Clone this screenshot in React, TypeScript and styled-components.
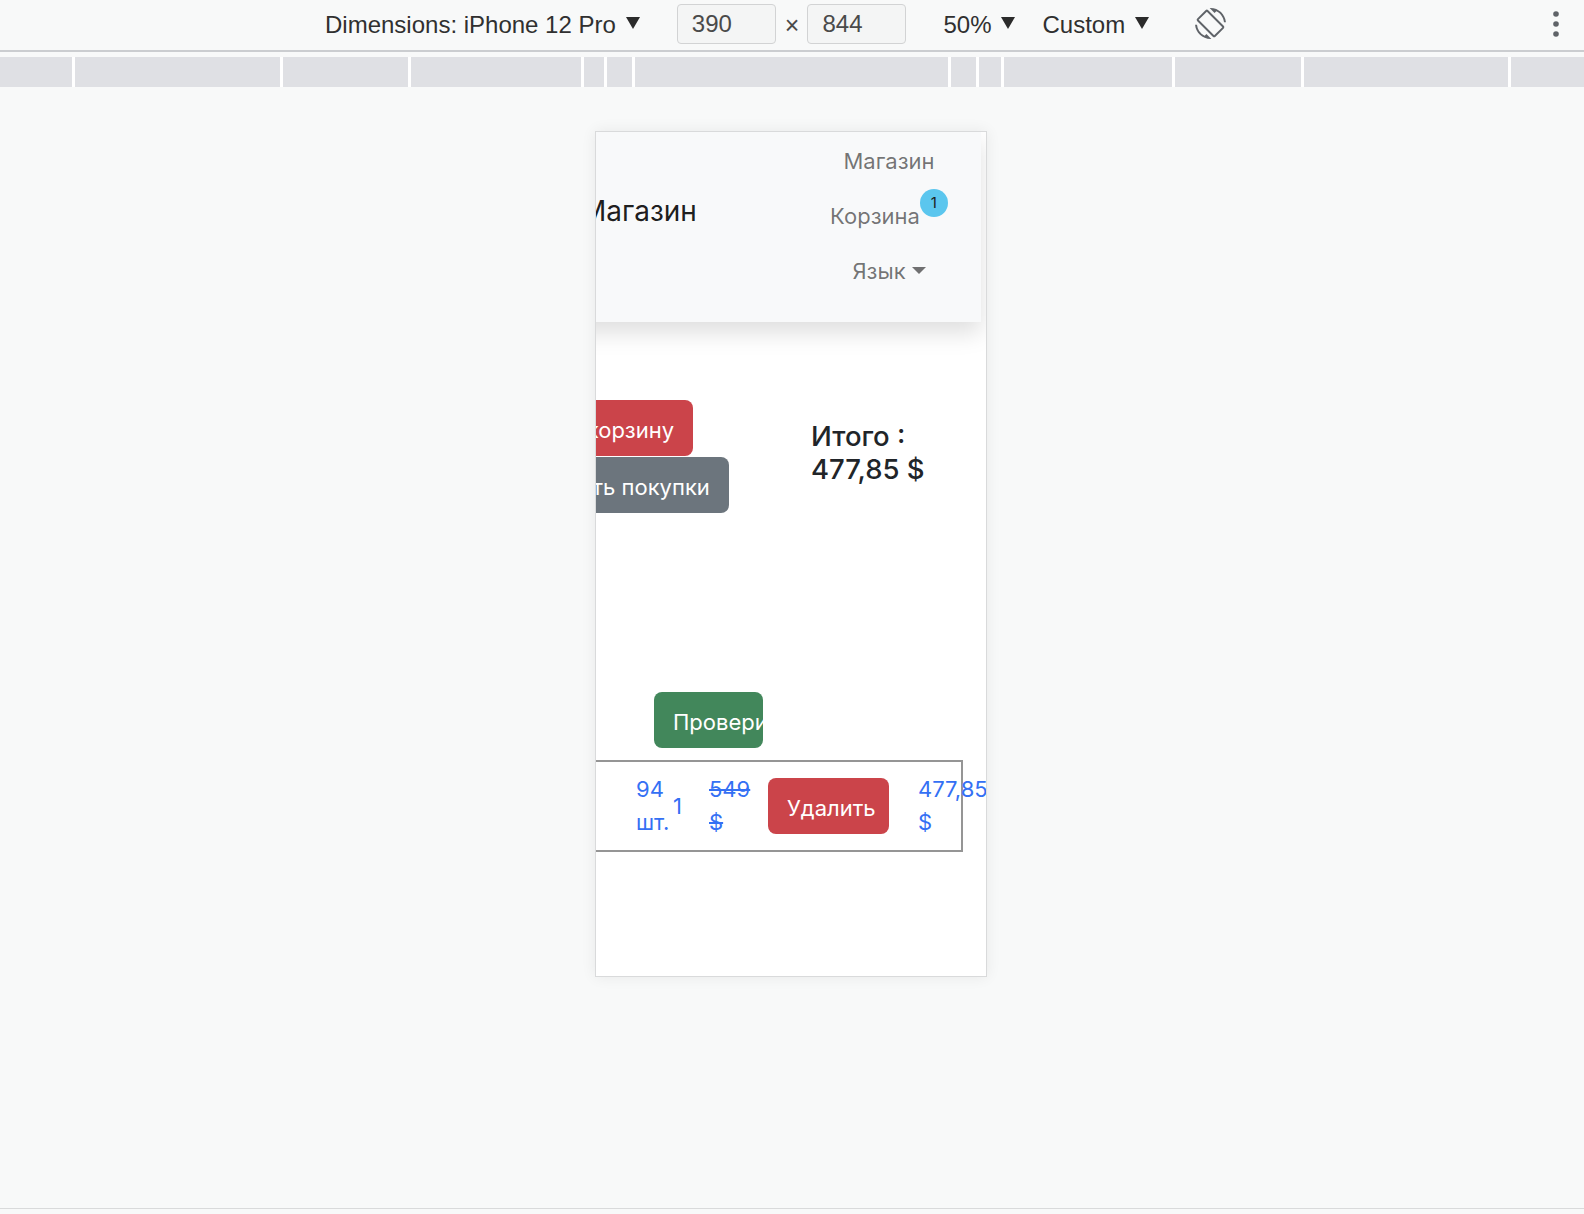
import React from 'react'
import styled, { createGlobalStyle } from 'styled-components'
import { MdOutlineScreenRotation } from 'react-icons/md'

const GlobalStyle = createGlobalStyle`
  html, body {
    margin: 0;
    padding: 0;
    background: #f8f9f9;
  }
  * {
    box-sizing: border-box;
  }
`

const Shell = styled.div`
  height: 1214px;
  display: flex;
  flex-direction: column;
  background: #f8f9f9;
  overflow: hidden;
`

// ---- devtools device toolbar ----

const Toolbar = styled.div`
  height: 52px;
  flex-shrink: 0;
  display: flex;
  align-items: center;
  padding-left: 325px;
  padding-right: 24px;
  border-bottom: 2px solid #cbcdd0;
  font-family: 'Liberation Sans', Arial, sans-serif;
  font-size: 24px;
  color: #303030;
`

const ToolText = styled.span<{ $gap?: number }>`
  margin-left: ${({ $gap }) => $gap ?? 0}px;
  white-space: nowrap;
`

const Caret = styled.span<{ $gap?: number }>`
  display: inline-block;
  margin-left: ${({ $gap }) => $gap ?? 10}px;
  width: 0;
  height: 0;
  border-left: 7px solid transparent;
  border-right: 7px solid transparent;
  border-top: 12px solid #2b2b2b;
  margin-top: -4px;
`

const SizeBox = styled.div<{ $gap?: number }>`
  margin-left: ${({ $gap }) => $gap ?? 0}px;
  width: 99px;
  height: 40px;
  margin-top: -3px;
  border: 1.5px solid #d2d3d4;
  border-radius: 4px;
  background: #f4f5f5;
  display: flex;
  align-items: center;
  padding-left: 14px;
  color: #4a4a4a;
`

const Times = styled.span`
  margin: 0 8px 0 9px;
  font-size: 25px;
  color: #4a4a4a;
`

const RotateIcon = styled.span`
  margin-left: 46px;
  display: flex;
  color: #5f6368;
  margin-top: -3px;
`

const MoreDots = styled.span`
  margin-left: auto;
  display: flex;
  margin-top: -2px;
`

// ---- media query ruler ----

const Ruler = styled.div`
  margin-top: 5px;
  height: 30px;
  flex-shrink: 0;
  display: flex;
  gap: 3px;
  background: #ffffff;
`

const RulerSegment = styled.div<{ $w?: number }>`
  background: #dfe0e4;
  ${({ $w }) => ($w ? `width: ${$w}px; flex-shrink: 0;` : 'flex: 1;')}
`

// ---- emulated device ----

const Stage = styled.div`
  flex: 1;
  display: flex;
  justify-content: center;
  align-items: flex-start;
  padding-top: 44px;
  padding-right: 2px;
`

const Frame = styled.div`
  width: 392px;
  height: 846px;
  border: 1px solid #d9dadb;
  background: #ffffff;
  overflow: hidden;
  box-shadow: 0 0 14px rgba(0, 0, 0, 0.07);
`

// page is scrolled sideways inside the device, so it starts left of the frame
const Page = styled.div`
  width: 530px;
  margin-left: -140px;
  font-family: Inter, 'Noto Sans', sans-serif;
  color: #212529;
`

const Navbar = styled.nav`
  position: relative;
  z-index: 1;
  width: 525px;
  height: 190px;
  display: flex;
  background: #f8f9fa;
  box-shadow: 0 11px 22px rgba(0, 0, 0, 0.13);
`

const Brand = styled.a`
  margin-left: 125px;
  margin-top: 58px;
  font-size: 28px;
  line-height: 42px;
  height: 42px;
  color: rgba(0, 0, 0, 0.9);
  white-space: nowrap;
`

const NavList = styled.ul`
  list-style: none;
  margin: 0 0 0 auto;
  padding: 2px 0 0;
  width: 184px;
  display: flex;
  flex-direction: column;
  align-items: center;
`

const NavItem = styled.li`
  height: 55px;
  display: flex;
  align-items: center;
  font-size: 22px;
  line-height: 33px;
  color: rgba(0, 0, 0, 0.55);
`

const NavLabel = styled.span<{ $toggle?: boolean }>`
  display: inline-flex;
  align-items: center;
  white-space: nowrap;
  ${({ $toggle }) =>
    $toggle &&
    `
    &::after {
      content: '';
      display: inline-block;
      margin-left: 6px;
      margin-top: -2px;
      border-top: 7px solid currentColor;
      border-left: 7px solid transparent;
      border-right: 7px solid transparent;
    }
  `}
`

const Badge = styled.span`
  position: relative;
  top: -14px;
  width: 28px;
  height: 28px;
  border-radius: 50%;
  background: #5bc6ee;
  color: #1d1d1d;
  font-size: 15px;
  line-height: 1;
  display: flex;
  align-items: center;
  justify-content: center;
`

const SummaryRow = styled.div`
  margin-top: 78px;
  display: grid;
  grid-template-columns: 355px 150px;
  align-items: center;
`

const ButtonStack = styled.div`
  display: flex;
  flex-direction: column;
  align-items: flex-start;
  gap: 1px;
  padding-left: 4px;
`

const Button = styled.button<{ $tone: 'danger' | 'secondary' | 'success'; $w?: number }>`
  height: 56px;
  padding: 4px 19px 0;
  border: none;
  border-radius: 8px;
  font-family: inherit;
  font-size: 22px;
  color: #ffffff;
  white-space: nowrap;
  text-align: left;
  overflow: hidden;
  flex-shrink: 0;
  ${({ $w }) => ($w ? `width: ${$w}px;` : '')}
  background: ${({ $tone }) =>
    $tone === 'danger' ? '#cb444a' : $tone === 'secondary' ? '#6c757d' : '#42875b'};
`

const Total = styled.h4`
  margin: 0 0 8px;
  width: 130px;
  font-size: 27.5px;
  font-weight: 500;
  line-height: 1.2;
  color: #212529;
`

const CheckoutWrap = styled.div`
  margin-top: 179px;
  padding-left: 198px;
`

const CartTable = styled.div`
  margin-top: 12px;
  width: 507px;
  border: 2px solid #959595;
`

const CartRow = styled.div`
  display: grid;
  grid-template-columns: 178px 37px 36px 59px 150px minmax(0, 1fr);
  align-items: center;
  padding: 11px 0;
  font-size: 22px;
  line-height: 33px;
`

const Cell = styled.div<{ $struck?: boolean }>`
  width: min-content;
  color: #3470f4;
  white-space: normal;
  text-decoration: ${({ $struck }) => ($struck ? 'line-through' : 'none')};
`

const BottomEdge = styled.div`
  height: 6px;
  flex-shrink: 0;
  border-top: 1.5px solid #d9dadb;
`

// x where each white separator of the media-query bar starts
const separators = [72, 280, 408, 581, 604, 632, 948, 976, 1001, 1172, 1301, 1508]

export default function App() {
  return (
    <>
      <GlobalStyle />
      <Shell>
        <Toolbar>
          <ToolText>Dimensions: iPhone 12 Pro</ToolText>
          <Caret $gap={10} />
          <SizeBox $gap={37}>390</SizeBox>
          <Times>×</Times>
          <SizeBox>844</SizeBox>
          <ToolText $gap={37}>50%</ToolText>
          <Caret $gap={10} />
          <ToolText $gap={27}>Custom</ToolText>
          <Caret $gap={10} />
          <RotateIcon>
            <MdOutlineScreenRotation size={31} />
          </RotateIcon>
          <MoreDots>
            <svg width="8" height="28" viewBox="0 0 8 28">
              <circle cx="4" cy="4" r="2.8" fill="#5f6368" />
              <circle cx="4" cy="14" r="2.8" fill="#5f6368" />
              <circle cx="4" cy="24" r="2.8" fill="#5f6368" />
            </svg>
          </MoreDots>
        </Toolbar>

        <Ruler>
          {separators.map((s, i) => (
            <RulerSegment key={s} $w={i === 0 ? s : s - separators[i - 1] - 3} />
          ))}
          <RulerSegment />
        </Ruler>

        <Stage>
          <Frame>
            <Page>
              <Navbar>
                <Brand>Магазин</Brand>
                <NavList>
                  <NavItem>
                    <NavLabel>Магазин</NavLabel>
                  </NavItem>
                  <NavItem>
                    <NavLabel>
                      Корзина
                      <Badge>1</Badge>
                    </NavLabel>
                  </NavItem>
                  <NavItem>
                    <NavLabel $toggle>Язык</NavLabel>
                  </NavItem>
                </NavList>
              </Navbar>

              <SummaryRow>
                <ButtonStack>
                  <Button $tone="danger">Очистить корзину</Button>
                  <Button $tone="secondary">Продолжить покупки</Button>
                </ButtonStack>
                <Total>Итого : 477,85 $</Total>
              </SummaryRow>

              <CheckoutWrap>
                <Button $tone="success" $w={109}>
                  Проверить
                </Button>
              </CheckoutWrap>

              <CartTable>
                <CartRow>
                  <div />
                  <Cell>94 шт.</Cell>
                  <Cell>1</Cell>
                  <Cell $struck>549 $</Cell>
                  <div>
                    <Button $tone="danger" $w={121}>
                      Удалить
                    </Button>
                  </div>
                  <Cell>477,85 $</Cell>
                </CartRow>
              </CartTable>
            </Page>
          </Frame>
        </Stage>

        <BottomEdge />
      </Shell>
    </>
  )
}
